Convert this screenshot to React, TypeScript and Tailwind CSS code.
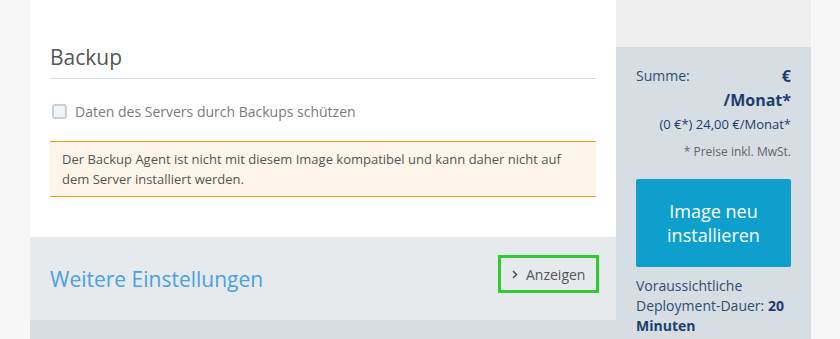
import React from "react";

export default function App() {
  return (
    <div
      className="flex w-[840px] h-[339px] overflow-hidden bg-[#f7f7f7]"
      style={{ fontFamily: '"Open Sans", "Noto Sans", sans-serif' }}
    >
      <div className="w-[30px] shrink-0 bg-[#f7f7f7]" />
      <div className="w-[586px] shrink-0 flex flex-col">
        <div className="bg-white px-[20px] pt-[42px] pb-[40px]">
          <div className="text-[21px] leading-[30px] text-[#555] pb-[6px] border-b border-[#d5dde4]">
            Backup
          </div>
          <div className="mt-[21px] flex items-center h-[22px]">
            <span className="ml-[2px] w-[15px] h-[15px] rounded-[3px] border-2 border-[#c8cfd9] bg-[#f1f3f6]" />
            <span className="ml-[8px] text-[14px] text-[#7b7b7b]">
              Daten des Servers durch Backups schützen
            </span>
          </div>
          <div className="mt-[19px] bg-[#fef5ea] border-y border-[#f39c12] px-[12px] pt-[7px] pb-[7px] text-[13px] leading-[20px] text-[#555]">
            Der Backup Agent ist nicht mit diesem Image kompatibel und kann daher nicht auf dem Server installiert werden.
          </div>
        </div>
        <div className="h-[83px] bg-[#e6eaed] pl-[20px] pr-[17px] flex items-center justify-between">
          <div className="text-[21px] leading-[30px] text-[#4d9fe0]">Weitere Einstellungen</div>
          <div className="h-[38px] w-[101px] border-[3px] border-[#2ecc2e] flex items-center pl-[11px] mt-[-9px] text-[14px] text-[#555]">
            <svg width="6" height="9" viewBox="0 0 6 9" className="mr-[8px]">
              <path d="M1 1 L4.5 4.5 L1 8" stroke="#555" strokeWidth="1.6" fill="none" />
            </svg>
            Anzeigen
          </div>
        </div>
        <div className="flex-1 bg-[#d7dde3]" />
      </div>
      <div className="w-[195px] shrink-0 flex flex-col">
        <div className="h-[47px] bg-[#efefef]" />
        <div className="flex-1 bg-[#d6dde3] px-[20px] pt-[17px]">
          <div className="flex justify-between">
            <span className="text-[14px] leading-[24px] text-[#2d4f73]">Summe:</span>
            <span className="text-[16px] leading-[24px] font-bold text-[#1d3e6c] text-right w-[80px]">
              € /Monat*
            </span>
          </div>
          <div className="mt-[2px] text-right text-[13px] leading-[20px] text-[#1d3e6c]">
            (0 €*) 24,00 €/Monat*
          </div>
          <div className="mt-[8px] text-right text-[12px] leading-[20px] text-[#666]">
            * Preise inkl. MwSt.
          </div>
          <div className="mt-[17px] h-[88px] rounded-[2px] bg-[#0e9fcd] flex items-center justify-center text-center text-white text-[18px] leading-[24px]">
            Image neu
            <br />
            installieren
          </div>
          <div className="mt-[9px] text-[14px] leading-[20px] text-[#2d4f73]">
            Voraussichtliche Deployment-Dauer: <b className="text-[#1d3e6c]">20 Minuten</b>
          </div>
        </div>
      </div>
      <div className="flex-1 bg-[#f7f7f7]" />
    </div>
  );
}
